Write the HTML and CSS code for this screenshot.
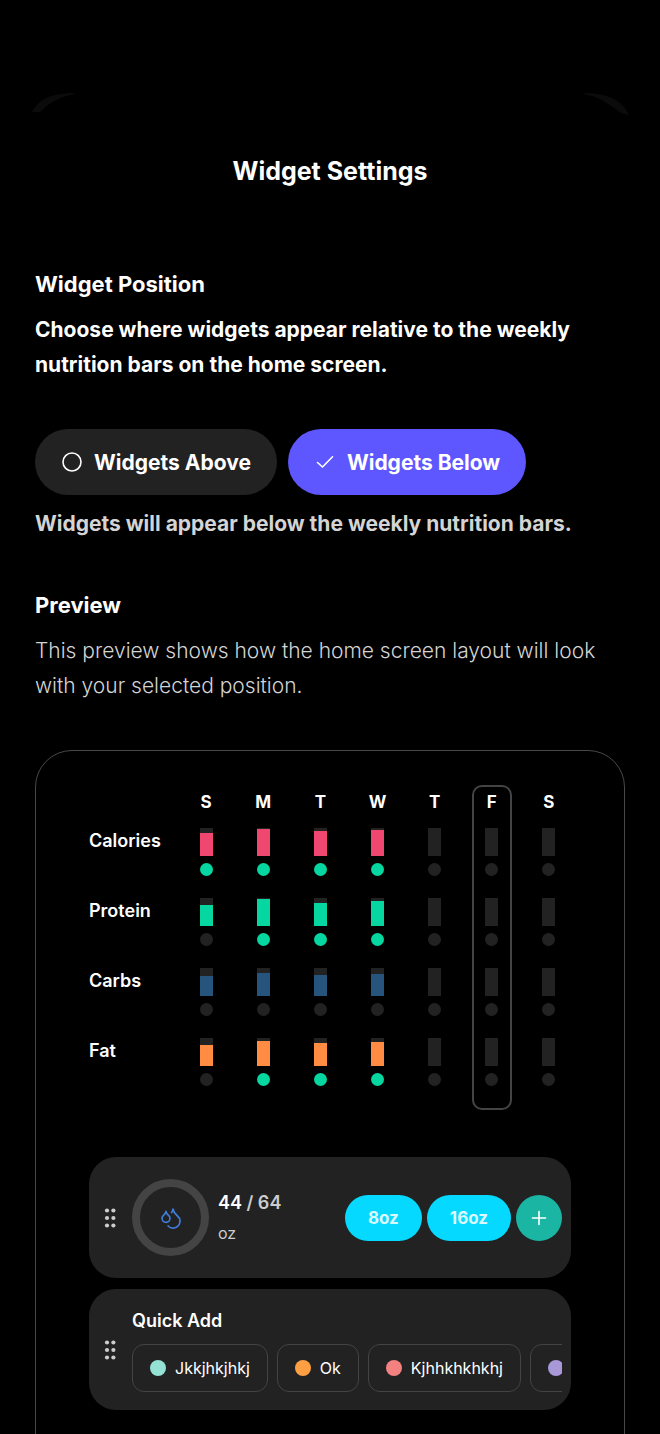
FILE: index.html
```html
<!DOCTYPE html>
<html lang="en">
<head>
  <meta charset="UTF-8">
  <meta name="viewport" content="width=device-width, initial-scale=1">
  <title>Widget Settings</title>
  <link rel="stylesheet" href="styles.css">
</head>
<body>

<main class="sheet">
  <div class="sheet-corners">
    <svg width="46" height="22" viewBox="0 0 46 22"><path d="M1 19C8 6 20 0 45 0L40 2C28 4 18 10 9 19Z" fill="#0b0b0b"/></svg>
    <svg width="46" height="22" viewBox="0 0 46 22"><path d="M46 22C40 8 26 0 0 0L4 2C18 4 28 13 38 20Z" fill="#0b0b0b"/></svg>
  </div>

  <h1>Widget Settings</h1>

  <section>
    <h2>Widget Position</h2>
    <p class="lead">Choose where widgets appear relative to the weekly nutrition bars on the home screen.</p>
    <div class="options">
      <button type="button" class="option" aria-pressed="false">
        <svg width="22" height="22" viewBox="0 0 22 22"><circle cx="11" cy="11" r="9" fill="none" stroke="#fff" stroke-width="1.6"/></svg>
        Widgets Above
      </button>
      <button type="button" class="option selected" aria-pressed="true">
        <svg width="22" height="22" viewBox="0 0 22 22"><path d="M3.5 11.5L8.5 16L18.5 5.8" fill="none" stroke="#fff" stroke-width="1.6" stroke-linecap="round" stroke-linejoin="round"/></svg>
        Widgets Below
      </button>
    </div>
    <p class="status">Widgets will appear below the weekly nutrition bars.</p>
  </section>

  <section>
    <h2>Preview</h2>
    <p class="muted">This preview shows how the home screen layout will look with your selected position.</p>
  </section>

  <div class="preview">
    <div class="week">
      <div class="labels">
        <span>Calories</span>
        <span>Protein</span>
        <span>Carbs</span>
        <span>Fat</span>
      </div>
      <div class="days" id="days"></div>
    </div>

    <div class="widgets">
      <div class="widget water">
        <svg class="handle" width="14" height="20" viewBox="0 0 14 20"><g fill="#ccc"><circle cx="4" cy="2.5" r="2.1"/><circle cx="10.4" cy="2.5" r="2.1"/><circle cx="4" cy="10" r="2.1"/><circle cx="10.4" cy="10" r="2.1"/><circle cx="4" cy="17.5" r="2.1"/><circle cx="10.4" cy="17.5" r="2.1"/></g></svg>
        <div class="ring">
          <svg width="24" height="24" viewBox="0 0 24 24" fill="none" stroke="#3f7ddb" stroke-width="1.7" stroke-linecap="round" stroke-linejoin="round"><path d="M7 16.3c2.2 0 4-1.83 4-4.05 0-1.16-.57-2.26-1.71-3.19S7.29 6.75 7 5.3c-.29 1.45-1.14 2.84-2.29 3.76S3 11.1 3 12.25c0 2.22 1.8 4.05 4 4.05z"/><path d="M12.56 6.6A10.97 10.97 0 0 0 14 3.02c.5 2.5 2 4.9 4 6.5s3 3.5 3 5.5a6.98 6.98 0 0 1-11.91 4.97"/></svg>
        </div>
        <div class="amount">
          <strong>44 <span>/ 64</span></strong>
          <span>oz</span>
        </div>
        <div class="water-buttons">
          <button type="button" class="pill">8oz</button>
          <button type="button" class="pill">16oz</button>
          <button type="button" class="add" aria-label="Add">
            <svg width="16" height="16" viewBox="0 0 16 16"><path d="M8 1.5V14.5M1.5 8H14.5" stroke="#fff" stroke-width="1.6" stroke-linecap="round"/></svg>
          </button>
        </div>
      </div>

      <div class="widget quick">
        <svg class="handle" width="14" height="20" viewBox="0 0 14 20"><g fill="#ccc"><circle cx="4" cy="2.5" r="2.1"/><circle cx="10.4" cy="2.5" r="2.1"/><circle cx="4" cy="10" r="2.1"/><circle cx="10.4" cy="10" r="2.1"/><circle cx="4" cy="17.5" r="2.1"/><circle cx="10.4" cy="17.5" r="2.1"/></g></svg>
        <div class="quick-body">
          <h3>Quick Add</h3>
          <div class="chips">
            <button type="button" class="chip"><i class="mint"></i>Jkkjhkjhkj</button>
            <button type="button" class="chip"><i class="orange"></i>Ok</button>
            <button type="button" class="chip"><i class="coral"></i>Kjhhkhkhkhj</button>
            <button type="button" class="chip" aria-label="More"><i class="lilac"></i></button>
          </div>
        </div>
      </div>
    </div>
  </div>
</main>

<script>
  // percent filled and goal reached, in the order of the nutrients
  const nutrients = ["calories", "protein", "carbs", "fat"];
  const week = [
    {day: "S", fill: [82, 75, 71, 75], goal: [1, 0, 0, 0]},
    {day: "M", fill: [97, 96, 82, 89], goal: [1, 1, 0, 1]},
    {day: "T", fill: [89, 82, 75, 82], goal: [1, 1, 0, 1]},
    {day: "W", fill: [93, 88, 78, 86], goal: [1, 1, 0, 1]},
    {day: "T", fill: [0, 0, 0, 0], goal: [0, 0, 0, 0]},
    {day: "F", fill: [0, 0, 0, 0], goal: [0, 0, 0, 0], today: true},
    {day: "S", fill: [0, 0, 0, 0], goal: [0, 0, 0, 0]}
  ];

  const daysDiv = document.getElementById("days");
  week.forEach(item => {
    const col = document.createElement("div");
    col.className = item.today ? "day today" : "day";
    col.innerHTML = `<span class="letter">${item.day}</span>` + nutrients.map((name, i) => `
      <div class="cell">
        <div class="bar"><div class="fill ${name}" style="height: ${item.fill[i]}%"></div></div>
        <div class="dot ${item.goal[i] ? "done" : ""}"></div>
      </div>
    `).join("");
    daysDiv.appendChild(col);
  });
</script>

</body>
</html>
```

FILE: styles.css
```css
* {
  box-sizing: border-box;
}
body {
  margin: 0;
  background: #000;
  color: #fff;
  font-family: Inter, "Liberation Sans", sans-serif;
  font-size: 21px;
  line-height: 35px;
}
h1, h2, h3, p {
  margin: 0;
}
button {
  font-family: inherit;
  color: #fff;
  border: none;
  cursor: pointer;
}
svg {
  display: block;
  flex-shrink: 0;
}
.sheet {
  display: flex;
  flex-direction: column;
  gap: 47px;
  height: 100vh;
  overflow: hidden;
  padding: 93px 35px 0;
}
.sheet-corners {
  display: flex;
  justify-content: space-between;
  margin: 0 -4px -8px;
}
h1 {
  font-size: 25px;
  font-weight: 700;
  text-align: center;
  margin-bottom: 31px;
}
h2 {
  font-size: 22px;
  font-weight: 700;
  margin-bottom: 10px;
}
.lead, .status {
  font-weight: 700;
}
.status {
  color: #d4d4d4;
}
.muted {
  color: #d4d4d4;
  font-weight: 300;
}

/* position buttons */
.options {
  display: flex;
  gap: 11px;
  margin: 47px 0 11px;
}
.option {
  display: flex;
  align-items: center;
  gap: 11px;
  height: 66px;
  padding: 0 26px;
  border-radius: 33px;
  background: #222;
  font-size: 21px;
  font-weight: 700;
}
.option.selected {
  background: #5e57ff;
}

/* preview card */
.preview {
  flex-shrink: 0;
  padding: 34px 53px 60px;
  border: 1px solid #484848;
  border-radius: 37px;
}
.week {
  display: flex;
}
.labels {
  width: 97px;
  padding-top: 43px;
  font-size: 18px;
  font-weight: 600;
  line-height: 26px;
}
.labels span {
  display: block;
  height: 70px;
}
.days {
  flex: 1;
  display: flex;
  justify-content: space-between;
  padding-right: 2px;
}
.day {
  display: flex;
  flex-direction: column;
  align-items: center;
  gap: 22px;
  width: 40px;
  padding: 5px 0 22px;
  border: 2px solid transparent;
  border-radius: 10px;
}
.day.today {
  border-color: #444;
}
.letter {
  font-size: 17px;
  font-weight: 700;
  line-height: 20px;
  margin-bottom: -6px;
}
.cell {
  display: flex;
  flex-direction: column;
  align-items: center;
  gap: 7px;
}
.bar {
  display: flex;
  align-items: flex-end;
  width: 13px;
  height: 28px;
  background: #222;
}
.fill {
  width: 100%;
}
.calories { background: #ef476f; }
.protein { background: #06d6a0; }
.carbs { background: #26547c; }
.fat { background: #ff8c42; }
.dot {
  width: 13px;
  height: 13px;
  border-radius: 50%;
  background: #222;
}
.dot.done {
  background: #06d6a0;
}

/* widgets */
.widgets {
  display: flex;
  flex-direction: column;
  gap: 11px;
  margin-top: 47px;
}
.widget {
  display: flex;
  align-items: center;
  height: 121px;
  padding: 0 9px 0 14px;
  border-radius: 27px;
  background: #222;
}
.handle {
  margin-right: 15px;
}
.ring {
  display: flex;
  align-items: center;
  justify-content: center;
  width: 77px;
  height: 77px;
  border: 8px solid #444;
  border-radius: 50%;
}
.amount {
  margin-left: 9px;
  font-size: 16px;
  line-height: 30px;
  color: #ccc;
}
.amount strong {
  display: block;
  font-size: 18px;
  font-weight: 600;
  color: #fff;
}
.amount strong span {
  color: #ccc;
}
.water-buttons {
  display: flex;
  gap: 5px;
  margin-left: auto;
}
.pill {
  height: 46px;
  padding: 0 23px;
  border-radius: 23px;
  background: #06d9ff;
  color: #d9faff;
  font-size: 17px;
  font-weight: 700;
}
.add {
  display: flex;
  align-items: center;
  justify-content: center;
  width: 46px;
  height: 46px;
  padding: 0;
  border-radius: 50%;
  background: #1bb5a4;
}
.quick-body {
  flex: 1;
  min-width: 0;
}
h3 {
  font-size: 18px;
  font-weight: 600;
  line-height: 26px;
  margin-bottom: 10px;
}
.chips {
  display: flex;
  gap: 9px;
  overflow: hidden;
}
.chip {
  display: flex;
  flex-shrink: 0;
  align-items: center;
  gap: 9px;
  height: 48px;
  padding: 0 17px;
  border: 1px solid #444;
  border-radius: 12px;
  background: none;
  font-size: 16px;
}
.chip i {
  width: 16px;
  height: 16px;
  border-radius: 50%;
}
.mint { background: #95e1d3; }
.orange { background: #ff9f43; }
.coral { background: #f38181; }
.lilac { background: #a898d8; }
```
